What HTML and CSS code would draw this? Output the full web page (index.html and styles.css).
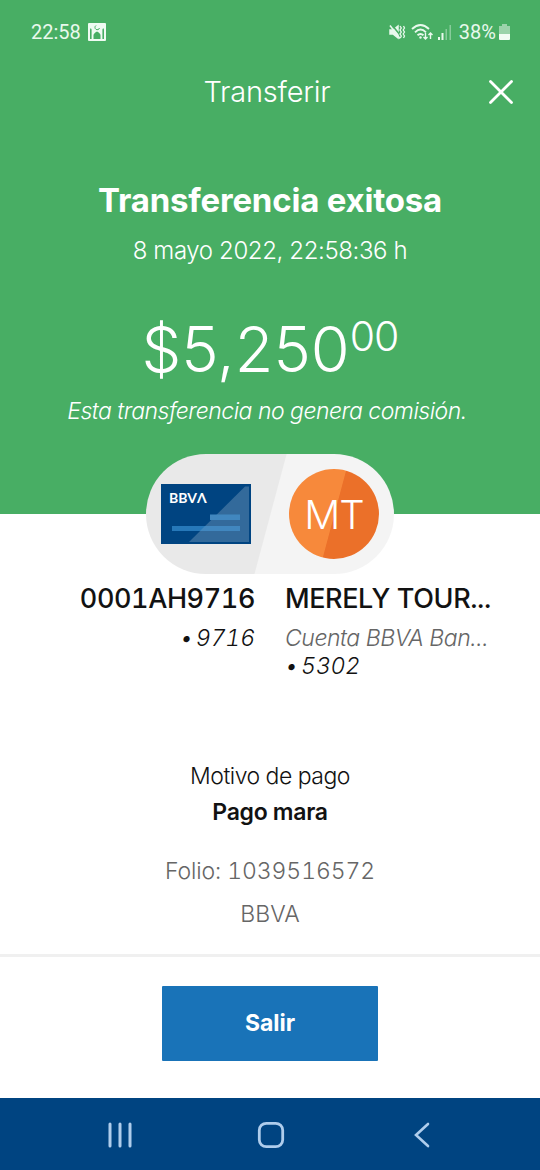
FILE: index.html
```html
<!DOCTYPE html>
<html lang="es">
<head>
    <meta charset="UTF-8">
    <meta name="viewport" content="width=device-width, initial-scale=1.0">
    <title>Transferir</title>
    <link rel="stylesheet" href="styles.css">
</head>
<body>
    <div class="hero">
        <div class="status-bar">
            <span class="time">22:58</span>
            <svg class="photo-icon" width="18" height="18" viewBox="0 0 18 18">
                <rect width="18" height="18" rx="1" fill="#effbf2"/>
                <path d="M2 16V6.500l.8-1.500.8 1.500V16zM14.400 16V6.500l.8-1.500.8 1.500V16zM5.500 16v-3q-.5-2.500 3.500-4.500q4 2 3.500 4.500v3z" fill="#48ae64"/>
                <path d="M8 2.500a2.300 2.300 0 1 0 3.500 2.500" fill="none" stroke="#48ae64"/>
            </svg>
            <div class="status-icons">
                <svg width="17" height="17" viewBox="0 0 17 17" fill="none" stroke="#e9f9ed" stroke-width="1.500">
                    <path d="M1 6h3l5-4v12l-5-4H1z" fill="#e9f9ed"/>
                    <path d="M2.500 .5l9 11" stroke="#48ae64" stroke-width="1.500"/>
                    <path d="M1 1.500l10 13"/>
                    <path d="M11 2l1.300 2-1.300 2 1.300 2-1.300 2 1.300 2-1 2M14.500 2l1 2-1.300 2 1.300 2-1.300 2 1.300 2-1 2" stroke-width="1.300"/>
                </svg>
                <svg class="wifi" width="23" height="18" viewBox="0 0 23 18" fill="none" stroke="#e9f9ed" stroke-width="1.900">
                    <path d="M1 6q8.500-8 17 0M4 9.300q5.500-5.500 11 0M6.500 12.300q3-2.700 6 0"/>
                    <circle cx="9.500" cy="14.500" r="1.200" fill="#e9f9ed" stroke="none"/>
                    <path d="M14.500 10v6M12.500 14l2 2 2-2M19.500 16v-6M17.500 12l2-2 2 2" stroke-width="1.400"/>
                </svg>
                <svg class="signal" width="15" height="16" viewBox="0 0 15 16" fill="#e9f9ed">
                    <rect x="1" y="13" width="2" height="3"/>
                    <rect x="4.500" y="9" width="2" height="7"/>
                    <rect x="8.500" y="5" width="1.500" height="11" opacity=".4"/>
                    <rect x="12.500" y="1" width="1.500" height="15" opacity=".4"/>
                </svg>
                <span class="percent">38%</span>
                <svg class="battery" width="11" height="16" viewBox="0 0 11 16">
                    <path d="M3 0h5v2h3v8H0V2h3z" fill="#9bd3aa"/>
                    <path d="M0 10h11v5a1 1 0 0 1-1 1H1a1 1 0 0 1-1-1z" fill="#f2fcf4"/>
                </svg>
            </div>
        </div>

        <div class="nav">
            <span class="nav-title">Transferir</span>
            <svg class="close" width="26" height="26" viewBox="0 0 26 26">
                <path d="M2.500 2.500l21 21M23.500 2.500l-21 21" stroke="#fff" stroke-width="2.800" stroke-linecap="round"/>
            </svg>
        </div>

        <h1>Transferencia exitosa</h1>
        <div class="date">8 mayo 2022, 22:58:36 h</div>
        <div class="amount"><span class="whole">$5,250</span><span class="cents">00</span></div>
        <div class="fee">Esta transferencia no genera comisión.</div>
    </div>

    <!-- Origin / destination pill, overlaps the green area -->
    <div class="pill">
        <div class="card">
            <svg width="90" height="60" viewBox="0 0 90 60">
                <rect width="90" height="60" fill="#004481"/>
                <path d="M28 58L84 2.500h4V58z" fill="#336a9b"/>
                <rect x="11" y="42" width="68" height="5" fill="#2678b9"/>
                <rect x="49" y="30.500" width="30" height="5.500" fill="#4187bf"/>
                <path d="M39 47l5-5h35v5z" fill="#4187bf"/>
            </svg>
            <span class="card-brand">BBVΛ</span>
        </div>
        <div class="avatar">MT</div>
    </div>

    <div class="accounts">
        <div class="account from">
            <div class="name">0001AH9716</div>
            <div class="number">• 9716</div>
        </div>
        <div class="account to">
            <div class="name">MERELY TOUR...</div>
            <div class="type">Cuenta BBVA Ban...</div>
            <div class="number">• 5302</div>
        </div>
    </div>

    <div class="details">
        <div class="label">Motivo de pago</div>
        <div class="reason">Pago mara</div>
        <div class="folio">Folio: 1039516572</div>
        <div class="bank">BBVA</div>
    </div>

    <div class="footer">
        <button>Salir</button>
    </div>

    <div class="system-nav">
        <svg width="26" height="26" viewBox="0 0 26 26" stroke="#afcdec" stroke-width="3" stroke-linecap="round">
            <path d="M3 2v22M13 2v22M23 2v22"/>
        </svg>
        <svg class="home" width="28" height="28" viewBox="0 0 28 28" fill="none" stroke="#afcdec" stroke-width="2.800">
            <rect x="2.300" y="2.300" width="23.400" height="23.400" rx="7"/>
        </svg>
        <svg width="18" height="28" viewBox="0 0 18 28" fill="none" stroke="#afcdec" stroke-width="2.600" stroke-linecap="round">
            <path d="M15 3L3 14l12 11"/>
        </svg>
    </div>
</body>
</html>
```

FILE: styles.css
```css
* {
    box-sizing: border-box;
}

body {
    margin: 0;
    width: 540px;
    height: 1170px;
    background: #fff;
    color: #121212;
    font-family: Inter, "Open Sans", sans-serif;
    font-weight: 300;
    display: flex;
    flex-direction: column;
    overflow: hidden;
    white-space: nowrap;
}

svg {
    display: block;
}

.hero {
    height: 514px;
    background: #48ae64;
    color: #fff;
    text-align: center;
}

.status-bar {
    height: 64px;
    padding: 0 30px 0 31px;
    display: flex;
    align-items: center;
    font-family: Roboto, sans-serif;
    font-size: 20px;
    font-weight: 400;
    color: #e9f9ed;
}

.photo-icon {
    margin-left: 7px;
}

.status-icons {
    display: flex;
    align-items: center;
    margin-left: auto;
}

.wifi {
    margin-left: 5px;
}

.signal {
    margin: 0 7px 0 3px;
}

.battery {
    margin-left: 3px;
}

.nav {
    height: 56px;
    padding: 0 26px;
    display: grid;
    grid-template-columns: 26px 1fr 26px;
    align-items: center;
}

.nav-title {
    grid-column: 2;
    font-size: 29px;
    letter-spacing: -0.2px;
    margin: -2px 0 0 -6px;
}

h1 {
    margin: 55px 0 0;
    font-size: 33px;
    line-height: 50px;
    font-weight: 700;
    letter-spacing: -0.2px;
}

.date {
    margin-top: 8px;
    font-size: 24px;
    line-height: 36px;
    letter-spacing: -0.38px;
}

.amount {
    height: 90px;
    margin-top: 35px;
    display: flex;
    justify-content: center;
    align-items: flex-start;
}

.whole {
    font-size: 63px;
    line-height: 90px;
}

.cents {
    font-size: 41px;
    line-height: 64px;
    letter-spacing: -1px;
}

.fee {
    margin: 0 6px 0 0;
    font-size: 23px;
    line-height: 34px;
    font-style: italic;
    letter-spacing: -0.5px;
}

.pill {
    position: relative;
    width: 248px;
    height: 120px;
    margin: -60px auto 0;
    padding: 0 15px;
    border-radius: 60px;
    background: linear-gradient(105deg, #e9e9e9 50%, #f4f4f4 50.400%);
    display: flex;
    justify-content: space-between;
    align-items: center;
}

.card {
    position: relative;
}

.card-brand {
    position: absolute;
    left: 8px;
    top: 5px;
    font-family: Lato, sans-serif;
    font-size: 14px;
    line-height: 18px;
    font-weight: 700;
    color: #fff;
}

.avatar {
    width: 90px;
    height: 90px;
    border-radius: 50%;
    background: linear-gradient(105deg, #f7893b 50%, #eb7029 50.800%);
    color: #fff;
    font-size: 40px;
    line-height: 91px;
    letter-spacing: -1px;
    text-align: center;
}

.accounts {
    height: 176px;
    padding-top: 6px;
    display: grid;
    grid-template-columns: 255px 1fr;
    column-gap: 30px;
}

.from {
    text-align: right;
}

.name {
    font-size: 27px;
    line-height: 37px;
    font-weight: 550;
    letter-spacing: -0.4px;
    font-variant-numeric: tabular-nums;
}

.number,
.type {
    font-size: 23px;
    line-height: 28px;
    font-style: italic;
}

.number {
    font-variant-numeric: tabular-nums;
    letter-spacing: -0.1px;
    word-spacing: -3px;
}

.name + div {
    margin-top: 7px;
}

.type {
    color: #666;
    letter-spacing: -0.45px;
}

.details {
    height: 204px;
    padding-top: 8px;
    text-align: center;
    font-size: 23px;
    line-height: 36px;
}

.label {
    letter-spacing: -0.5px;
}

.reason {
    font-weight: 600;
    letter-spacing: -0.3px;
}

.folio {
    margin-top: 23px;
    color: #666;
    letter-spacing: -0.1px;
    font-variant-numeric: tabular-nums;
}

.bank {
    margin-top: 7px;
    color: #666;
}

.footer {
    height: 144px;
    padding-top: 29px;
    border-top: 3px solid #f0f0f0;
    text-align: center;
}

button {
    width: 216px;
    height: 75px;
    padding: 0 0 2px;
    border: none;
    border-radius: 1px;
    background: #1973b8;
    color: #fff;
    font-family: inherit;
    font-size: 23px;
    font-weight: 700;
}

.system-nav {
    height: 72px;
    padding: 2px 109px 0 107px;
    background: #004481;
    display: flex;
    justify-content: space-between;
    align-items: center;
}

.home {
    margin-right: 5px;
}
```
